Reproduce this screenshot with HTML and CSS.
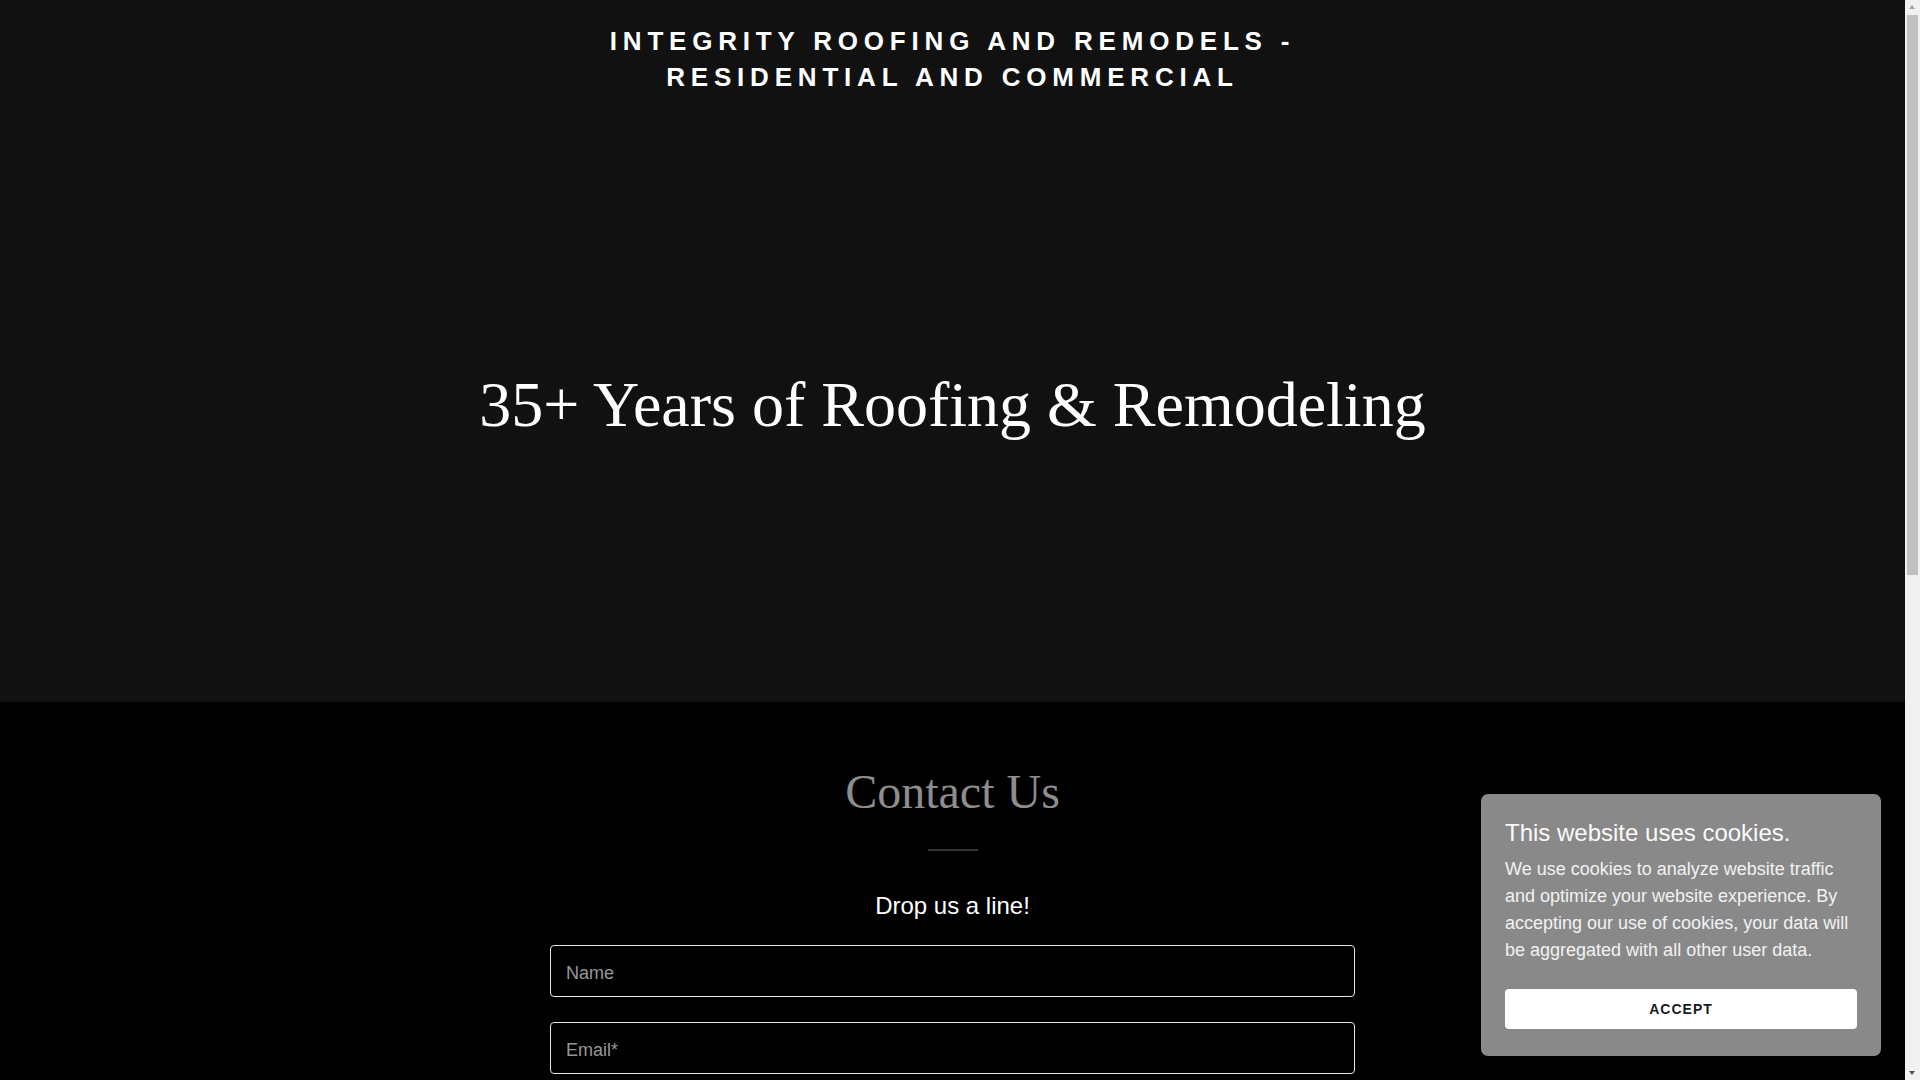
FILE: index.html
```html
<!DOCTYPE html>
<html lang="en">
<head>
<meta charset="utf-8">
<title>Integrity Roofing and Remodels</title>
<link rel="stylesheet" href="styles.css">
</head>
<body>
<main class="page">
<section class="hero">
  <header class="site-header">
    <h1 class="site-title">INTEGRITY ROOFING AND REMODELS -<br>RESIDENTIAL AND COMMERCIAL</h1>
  </header>
  <h2 class="hero-heading">35+ Years of Roofing &amp; Remodeling</h2>
</section>
<section class="contact">
  <h2 class="contact-title">Contact Us</h2>
  <div class="separator"></div>
  <p class="contact-sub">Drop us a line!</p>
  <form class="contact-form">
    <input class="field" type="text" placeholder="Name">
    <input class="field" type="email" placeholder="Email*">
    <textarea class="field field-area" placeholder="Message"></textarea>
    <button class="send" type="button">SEND</button>
  </form>
</section>
<footer class="footer">
  <p>Copyright © 2024 Integrity Roofing and Remodels - All Rights Reserved.</p>
</footer>
</main>
<div class="cookie">
  <h3 class="cookie-title">This website uses cookies.</h3>
  <p class="cookie-text">We use cookies to analyze website traffic and optimize your website experience. By accepting our use of cookies, your data will be aggregated with all other user data.</p>
  <button class="cookie-btn" type="button">ACCEPT</button>
</div>
<div class="scrollbar">
  <div class="sb-arrow sb-up"></div>
  <div class="sb-track"><div class="sb-thumb"></div></div>
  <div class="sb-arrow sb-down"></div>
</div>
</body>
</html>
```
FILE: styles.css
```css
html, body {
  margin: 0;
  padding: 0;
}
body {
  background: #000;
  color: #fff;
  font-family: "Liberation Sans", Arial, sans-serif;
}
.page {
  margin-right: 15px;
}
.hero {
  background: #111111;
  height: 702px;
  box-sizing: border-box;
  padding-top: 23px;
  text-align: center;
}
.site-title {
  margin: 0;
  font-family: "Liberation Sans", Arial, sans-serif;
  font-weight: 700;
  font-size: 26px;
  line-height: 36px;
  letter-spacing: 5.8px;
  color: #fff;
}
.hero-heading {
  margin: 272px 0 0;
  font-family: "Liberation Serif", "Times New Roman", serif;
  font-weight: 400;
  font-size: 64px;
  line-height: 1.2;
  color: #fff;
}
.contact {
  padding-top: 61px;
  display: flex;
  flex-direction: column;
  align-items: center;
}
.contact-title {
  margin: 0;
  font-family: "Liberation Serif", "Times New Roman", serif;
  font-weight: 400;
  font-size: 48px;
  line-height: 1.2;
  color: #8d8d8d;
}
.separator {
  width: 50px;
  height: 2px;
  background: #333;
  margin-top: 28px;
}
.contact-sub {
  margin: 37px 0 0;
  font-size: 24px;
  line-height: 36px;
  color: #fff;
}
.contact-form {
  width: 805px;
  margin-top: 21px;
  display: flex;
  flex-direction: column;
  gap: 25px;
}
.field {
  box-sizing: border-box;
  height: 52px;
  width: 100%;
  margin: 0;
  padding: 6px 15px 0;
  background: #000;
  border: 1px solid #e6e6e6;
  border-radius: 4px;
  color: #fff;
  font-family: "Liberation Sans", Arial, sans-serif;
  font-size: 18px;
  outline: none;
}
.field::placeholder {
  color: #969696;
}
.field-area {
  height: 140px;
  padding-top: 14px;
  resize: none;
}
.send {
  height: 52px;
  background: #fff;
  color: #000;
  border: none;
  border-radius: 4px;
  font-family: "Liberation Sans", Arial, sans-serif;
  font-weight: 700;
  font-size: 14px;
  letter-spacing: 1px;
}
.footer {
  padding: 60px 0;
  text-align: center;
  color: #8d8d8d;
  font-size: 14px;
}
.cookie {
  position: fixed;
  right: 39px;
  bottom: 24px;
  width: 400px;
  box-sizing: border-box;
  padding: 24px 24px 27px;
  background: #898989;
  border-radius: 7px;
}
.cookie-title {
  margin: 0;
  font-family: "Liberation Sans", Arial, sans-serif;
  font-weight: 400;
  font-size: 24px;
  line-height: 30px;
  color: #fafafa;
}
.cookie-text {
  margin: 8px 0 0;
  font-size: 18px;
  line-height: 27px;
  color: #f2f2f2;
}
.cookie-btn {
  display: block;
  width: 100%;
  height: 40px;
  margin-top: 25px;
  background: #fff;
  color: #1b1b1b;
  border: none;
  border-radius: 4px;
  font-family: "Liberation Sans", Arial, sans-serif;
  font-weight: 700;
  font-size: 14px;
  letter-spacing: 1px;
}
.scrollbar {
  position: fixed;
  top: 0;
  right: 0;
  width: 15px;
  height: 100vh;
  background: #f1f1f1;
  display: flex;
  flex-direction: column;
}
.sb-arrow {
  height: 15px;
  position: relative;
}
.sb-arrow::after {
  content: "";
  position: absolute;
  left: 4px;
  border-left: 3.5px solid transparent;
  border-right: 3.5px solid transparent;
}
.sb-up::after {
  top: 5px;
  border-bottom: 4px solid #a3a3a3;
}
.sb-down::after {
  top: 6px;
  border-top: 4px solid #505050;
}
.sb-track {
  flex: 1;
  padding: 0 2px;
}
.sb-thumb {
  height: 560px;
  background: #c1c1c1;
}
```
